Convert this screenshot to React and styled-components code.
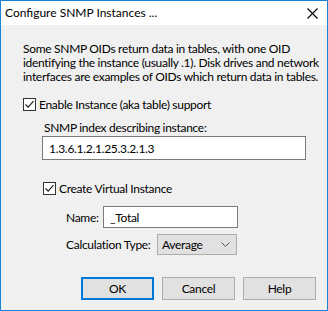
import React from "react";
import styled, { createGlobalStyle } from "styled-components";

const Global = createGlobalStyle`
    html, body {
        margin: 0;
        padding: 0;
        background: #ffffff;
    }
    body {
        font-family: Lato, "Liberation Sans", sans-serif;
        font-size: 12px;
        color: #000;
    }
`

const CheckIcon = () => (
    <svg width="11" height="11" viewBox="0 0 11 11">
        <path d="M1.5 5.5 L4.2 8.2 L9.5 2.2" fill="none" stroke="#222" strokeWidth="1.2"/>
    </svg>
);

const CloseIcon = () => (
    <svg width="11" height="11" viewBox="0 0 11 11">
        <path d="M0.5 0.5 L10.5 10.5 M10.5 0.5 L0.5 10.5" stroke="#000" strokeWidth="1.1"/>
    </svg>
);

const Chevron = () => (
    <svg width="9" height="5" viewBox="0 0 9 5">
        <path d="M0.5 0.5 L4.5 4.5 L8.5 0.5" fill="none" stroke="#555" strokeWidth="1"/>
    </svg>
);

const Checkbox = ({ label, indent, gap }) => (
    <CheckRow indent={indent} gap={gap}>
        <Box><CheckIcon/></Box>
        <span>{label}</span>
    </CheckRow>
);

export default function App() {
    return <>
        <Global/>
        <Window>
            <TitleBar>
                <Title>Configure SNMP Instances ...</Title>
                <CloseButton><CloseIcon/></CloseButton>
            </TitleBar>
            <Body>
                <Intro>
                    Some SNMP OIDs return data in tables, with one OID<br/>
                    identifying the instance (usually .1). Disk drives and network<br/>
                    interfaces are examples of OIDs which return data in tables.
                </Intro>
                <Checkbox gap={12} label="Enable Instance (aka table) support"/>
                <Section>
                    <FieldLabel>SNMP index describing instance:</FieldLabel>
                    <TextInput width={264} height={24} defaultValue="1.3.6.1.2.1.25.3.2.1.3"/>
                </Section>
                <Checkbox gap={20} indent={20} label="Create Virtual Instance"/>
                <Fields>
                    <FieldRow>
                        <RowLabel width={37}>Name:</RowLabel>
                        <TextInput width={135} height={22} defaultValue="_Total"/>
                    </FieldRow>
                    <FieldRow>
                        <RowLabel width={91}>Calculation Type:</RowLabel>
                        <Select>
                            <span>Average</span>
                            <Chevron/>
                        </Select>
                    </FieldRow>
                </Fields>
                <Buttons>
                    <Button primary>OK</Button>
                    <Button>Cancel</Button>
                    <Button>Help</Button>
                </Buttons>
            </Body>
        </Window>
    </>
}

const Window = styled.div`
    width: 328px;
    height: 311px;
    box-sizing: border-box;
    border: 1px solid #1883d7;
    background: #f0f0f0;
    display: flex;
    flex-direction: column;
    overflow: hidden;
`

const TitleBar = styled.div`
    height: 24px;
    flex-shrink: 0;
    background: #ffffff;
    display: flex;
    flex-direction: row;
    align-items: center;
    justify-content: space-between;
    padding: 0 9px 0 4px;
`

const Title = styled.div`
    font-size: 12px;
    line-height: 16px;
    white-space: nowrap;
`

const CloseButton = styled.div`
    display: flex;
    align-items: center;
    margin-top: 1px;
`

const Body = styled.div`
    flex: 1;
    display: flex;
    flex-direction: column;
    padding: 17px 11px 0 22px;
    letter-spacing: -0.3px;
`

const Intro = styled.p`
    margin: 0;
    line-height: 14px;
    white-space: nowrap;
`

const CheckRow = styled.div`
    display: flex;
    flex-direction: row;
    align-items: center;
    height: 16px;
    margin-top: ${props => props.gap}px;
    margin-left: ${props => props.indent || 0}px;
    white-space: nowrap;
    span{
        margin-left: 3px;
    }
`

const Box = styled.div`
    width: 13px;
    height: 13px;
    flex-shrink: 0;
    box-sizing: border-box;
    border: 1px solid #333;
    background: #fff;
    display: flex;
    align-items: center;
    justify-content: center;
`

const Section = styled.div`
    display: flex;
    flex-direction: column;
    margin-left: 19px;
    margin-top: 8px;
`

const FieldLabel = styled.div`
    line-height: 16px;
    margin-left: 2px;
    white-space: nowrap;
`

const TextInput = styled.input`
    width: ${props => props.width}px;
    height: ${props => props.height}px;
    flex-shrink: 0;
    box-sizing: border-box;
    border: 1px solid #7a7a7a;
    background: #fff;
    font: inherit;
    letter-spacing: inherit;
    color: #000;
    padding: 0 6px;
    margin: 0;
    outline: none;
`

const Fields = styled.div`
    display: flex;
    flex-direction: column;
    gap: 6px;
    margin-top: 10px;
    margin-left: 43px;
`

const FieldRow = styled.div`
    display: flex;
    flex-direction: row;
    align-items: center;
`

const RowLabel = styled.div`
    width: ${props => props.width}px;
    flex-shrink: 0;
    white-space: nowrap;
`

const Select = styled.div`
    width: 80px;
    height: 21px;
    flex-shrink: 0;
    box-sizing: border-box;
    border: 1px solid #adadad;
    background: #e1e1e1;
    display: flex;
    align-items: center;
    justify-content: space-between;
    padding: 0 6px 0 4px;
`

const Buttons = styled.div`
    display: flex;
    flex-direction: row;
    justify-content: flex-end;
    gap: 8px;
    margin-top: 22px;
`

const Button = styled.div`
    width: 73px;
    height: 23px;
    box-sizing: border-box;
    border: ${props => props.primary ? "2px solid #0078d7" : "1px solid #adadad"};
    background: #e1e1e1;
    display: flex;
    align-items: center;
    justify-content: center;
`
